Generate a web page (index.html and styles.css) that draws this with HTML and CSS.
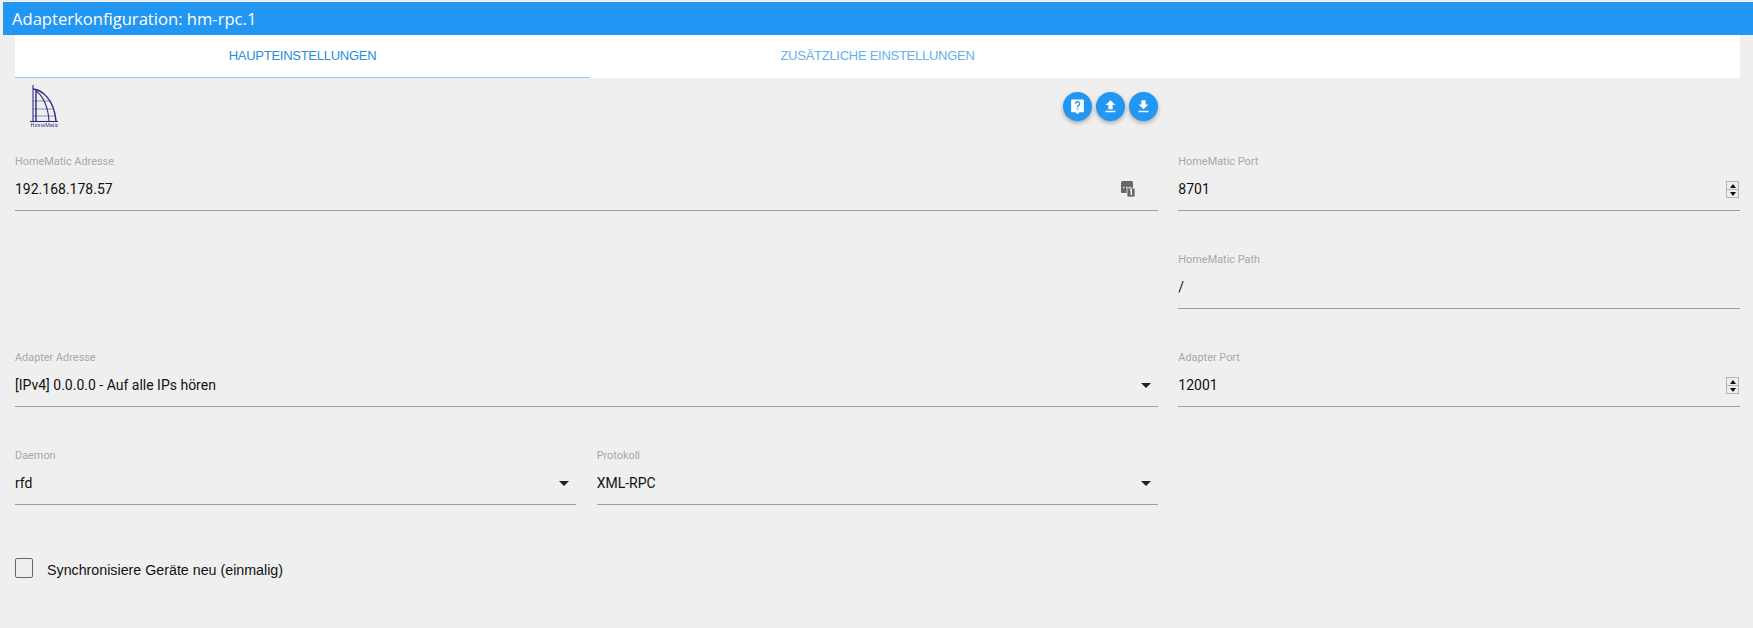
FILE: index.html
```html
<!DOCTYPE html>
<html lang="de">
<head>
<meta charset="utf-8">
<title>Adapterkonfiguration: hm-rpc.1</title>
<link rel="stylesheet" href="styles.css">
</head>
<body>
<header class="title-bar">Adapterkonfiguration: hm-rpc.1</header>
<nav class="tabs">
  <div class="tab tab-active">HAUPTEINSTELLUNGEN</div>
  <div class="tab">ZUSÄTZLICHE EINSTELLUNGEN</div>
  <div class="tab"></div>
</nav>
<main class="content">
  <div class="top-row">
    <svg class="logo" viewBox="0 0 36 48" aria-label="HomeMatic">
      <g fill="none" stroke="#2e2a80">
        <path d="M9 2V38" stroke-width="1.100"/>
        <path d="M12 7V38" stroke-width="1.400"/>
        <path d="M9 6C18 7 30 16 32 38" stroke-width="1.400"/>
        <path d="M12 8C18 12 24 22 25 38" stroke-width="1.100"/>
        <path d="M9 18H27M9 26H30M9 33H31" stroke-width="1" opacity=".5"/>
        <path d="M6 38.500H34" stroke-width="1.100"/>
      </g>
      <text x="20.500" y="44" class="logo-text">HomeMatic</text>
    </svg>
    <div class="actions">
      <button class="fab" aria-label="Hilfe"><svg viewBox="0 0 24 24"><path fill="#fff" d="M4 2h16a1 1 0 0 1 1 1v16a1 1 0 0 1-1 1h-5l-3 3-3-3H4a1 1 0 0 1-1-1V3a1 1 0 0 1 1-1z"/><path fill="none" stroke="#2196f3" stroke-width="2" d="M9.200 8a2.900 2.900 0 1 1 4.600 2.300c-1.200.9-1.800 1.300-1.800 2.700"/><rect x="11" y="14.500" width="2" height="2" fill="#2196f3"/></svg></button>
      <button class="fab" aria-label="Hochladen"><svg viewBox="0 0 24 24"><path fill="#fff" d="M9 16h6v-6h4l-7-7-7 7h4zM5 18h14v2H5z"/></svg></button>
      <button class="fab" aria-label="Herunterladen"><svg viewBox="0 0 24 24"><path fill="#fff" d="M19 9h-4V3H9v6H5l7 7zM5 18h14v2H5z"/></svg></button>
    </div>
  </div>
  <div class="form-grid">
    <div class="field span-2">
      <label class="field-label">HomeMatic Adresse</label>
      <div class="field-value">192.168.178.57
        <svg class="ip-icon" viewBox="0 0 14 16"><rect x="0" y="0" width="12" height="12" rx="1.500" fill="#666"/><path d="M2 6.500h1.500M5 6.500h1.500M8 6.500h1.500" stroke="#eee" stroke-width="1.400"/><rect x="6" y="7" width="8" height="9" rx="1.500" fill="#666" stroke="#eee" stroke-width=".8"/><path d="M9 9.500l1.300-.8v5.300" fill="none" stroke="#fff" stroke-width="1.400"/></svg>
      </div>
    </div>
    <div class="field">
      <label class="field-label">HomeMatic Port</label>
      <div class="field-value">8701<span class="spinner"><span class="spin-up"></span><span class="spin-down"></span></span></div>
    </div>

    <div class="field col-3">
      <label class="field-label">HomeMatic Path</label>
      <div class="field-value">/</div>
    </div>

    <div class="field span-2">
      <label class="field-label">Adapter Adresse</label>
      <div class="field-value">[IPv4] 0.0.0.0 - Auf alle IPs hören<span class="caret"></span></div>
    </div>
    <div class="field">
      <label class="field-label">Adapter Port</label>
      <div class="field-value">12001<span class="spinner"><span class="spin-up"></span><span class="spin-down"></span></span></div>
    </div>

    <div class="field field-narrow">
      <label class="field-label">Daemon</label>
      <div class="field-value">rfd<span class="caret"></span></div>
    </div>
    <div class="field">
      <label class="field-label">Protokoll</label>
      <div class="field-value">XML-RPC<span class="caret"></span></div>
    </div>
  </div>
  <div class="check-row">
    <span class="checkbox"></span>
    <span class="check-label">Synchronisiere Geräte neu (einmalig)</span>
  </div>
</main>
</body>
</html>
```
FILE: styles.css
```css
* { box-sizing: border-box; }
html, body { height: 100%; }
body {
  margin: 0;
  padding-top: 2px;
  background: #efefef;
  font-family: Roboto, "Liberation Sans", sans-serif;
  overflow: hidden;
}
.title-bar {
  height: 33px;
  margin-left: 3px;
  padding-left: 9px;
  background: #2196f3;
  color: #fff;
  font: 16.6px/34px "Open Sans", Roboto, sans-serif;
}
.tabs {
  display: grid;
  grid-template-columns: repeat(3, 1fr);
  height: 43px;
  margin: 0 13px 0 15px;
  background: #fff;
}
.tab {
  text-align: center;
  font: 13px/41px "Liberation Sans", Arial, sans-serif;
  color: #64b0ee;
  letter-spacing: -.27px;
}
.tab-active {
  color: #2a8ce0;
  border-bottom: 1px solid #90caf9;
}
.content { margin: 0 13px 0 15px; }
.top-row {
  display: grid;
  grid-template-columns: repeat(3, 1fr);
  column-gap: 20px;
  height: 77px;
}
.logo { margin: 5px 0 0 9px; width: 36px; height: 48px; filter: blur(.3px); }
.logo-text { font: 5.500px "Liberation Sans", sans-serif; fill: #2e2a80; text-anchor: middle; }
.actions {
  grid-column: 2;
  display: flex;
  justify-content: flex-end;
  gap: 4px;
  padding-top: 14px;
}
.fab {
  width: 29px;
  height: 29px;
  padding: 6px;
  border: 0;
  border-radius: 50%;
  background: #2196f3;
  box-shadow: 0 2px 4px rgba(0,0,0,.3);
}
.fab svg { display: block; width: 17px; height: 17px; }
.form-grid {
  display: grid;
  grid-template-columns: repeat(3, 1fr);
  column-gap: 20px;
  row-gap: 42px;
}
.field { height: 56px; display: flex; flex-direction: column; }
.field-narrow { margin-right: 1px; }
.span-2 { grid-column: span 2; }
.col-3 { grid-column: 3; }
.field-label {
  font: 10.9px/14px Roboto, sans-serif;
  color: #a8a8a8;
}
.field-value {
  flex: 1;
  display: flex;
  align-items: center;
  justify-content: space-between;
  font: 14px/20px Roboto, sans-serif;
  color: #111;
  border-bottom: 1px solid #9e9e9e;
  padding-bottom: 1px;
}
.ip-icon { width: 14px; height: 16px; margin-right: 23px; }
.spinner {
  display: flex;
  flex-direction: column;
  width: 13px;
  height: 17px;
  border: 1px solid #b5b5b5;
  background: #eee;
  margin-right: 1px;
}
.spin-up, .spin-down {
  flex: 1;
  position: relative;
}
.spin-down { border-top: 1px solid #b5b5b5; }
.spin-up::after, .spin-down::after {
  content: "";
  position: absolute;
  left: 2.5px;
  top: 2px;
  border-left: 3.5px solid transparent;
  border-right: 3.5px solid transparent;
}
.spin-up::after { border-bottom: 4px solid #111; }
.spin-down::after { border-top: 4px solid #111; }
.caret {
  width: 0;
  height: 0;
  margin-right: 7px;
  border-left: 5px solid transparent;
  border-right: 5px solid transparent;
  border-top: 5px solid #222;
}
.check-row {
  display: flex;
  align-items: flex-start;
  gap: 14px;
  margin-top: 53px;
}
.checkbox {
  width: 18px;
  height: 20px;
  border: 1px solid #666;
  border-radius: 2px;
}
.check-label {
  font: 14.25px/20px "Liberation Sans", Arial, sans-serif;
  color: #111;
  margin-top: 2px;
}
```
